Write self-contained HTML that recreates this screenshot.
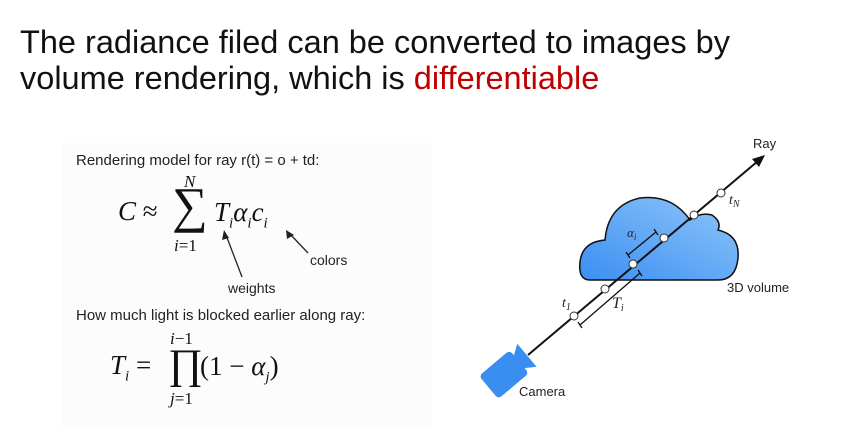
<!DOCTYPE html>
<html><head><style>
body{margin:0;width:856px;height:436px;background:#fff;overflow:hidden;position:relative;font-family:"Liberation Sans",sans-serif}
.t{position:absolute;left:20px;top:24px;font-size:32.5px;line-height:36px;color:#111}
.r{color:#c00000}
.s{position:absolute;font-size:15px;color:#222}
.m{position:absolute;font-family:"Liberation Serif",serif;font-style:italic;color:#111}
</style></head><body>
<div class="t">The radiance filed can be converted to images by<br>volume rendering, which is <span class="r">differentiable</span></div>
<div style="position:absolute;left:62px;top:143px;width:370px;height:285px;background:#fcfcfc"></div>
<div class="s" style="left:76px;top:152px">Rendering model for ray r(t) = o + td:</div>
<div class="m" style="left:184px;top:172px;font-size:17px">N</div>
<div class="m" style="left:118px;top:196px;font-size:27px">C <span style="font-style:normal">≈</span></div>
<div class="m" style="left:172px;top:180px;font-size:50px;font-style:normal;line-height:50px">∑</div>
<div class="m" style="left:214px;top:197px;font-size:27px">T<sub style="font-size:15px">i</sub>α<sub style="font-size:15px">i</sub>c<sub style="font-size:15px">i</sub></div>
<div class="m" style="left:174px;top:236px;font-size:17px">i<span style="font-style:normal">=1</span></div>
<div class="s" style="left:310px;top:252px;font-size:14px">colors</div>
<div class="s" style="left:228px;top:280px;font-size:14px">weights</div>
<svg style="position:absolute;left:0;top:0" width="856" height="436">
<line x1="242" y1="277" x2="226" y2="235" stroke="#222" stroke-width="1.3"/><polygon points="224,230 222,240 229,238" fill="#222"/>
<line x1="308" y1="253" x2="290" y2="234" stroke="#222" stroke-width="1.3"/><polygon points="286,230 287,239 294,235" fill="#222"/>
</svg>
<div class="s" style="left:76px;top:307px">How much light is blocked earlier along ray:</div>
<div class="m" style="left:170px;top:329px;font-size:17px">i<span style="font-style:normal">−1</span></div>
<div class="m" style="left:110px;top:350px;font-size:27px">T<sub style="font-size:15px">i</sub> <span style="font-style:normal">=</span></div>
<div class="m" style="left:168px;top:344px;font-size:42px;font-style:normal;line-height:42px">∏</div>
<div class="m" style="left:200px;top:351px;font-size:27px"><span style="font-style:normal">(1 − </span>α<sub style="font-size:15px">j</sub><span style="font-style:normal">)</span></div>
<div class="m" style="left:170px;top:389px;font-size:17px">j<span style="font-style:normal">=1</span></div>

<svg style="position:absolute;left:0;top:0" width="856" height="436">
<defs><linearGradient id="g" x1="0" y1="1" x2="1" y2="0"><stop offset="0" stop-color="#3b8ef2"/><stop offset="1" stop-color="#8fc7fa"/></linearGradient></defs>
<path d="M590,280 Q578,280 580,262 Q582,242 605,240 Q608,205 640,198 Q672,194 690,220 Q700,212 712,215 Q722,222 718,230 Q740,235 738,258 Q736,280 718,280 Z" fill="url(#g)" stroke="#111" stroke-width="1.5"/>
<line x1="528" y1="355" x2="758" y2="161" stroke="#111" stroke-width="2"/>
<polygon points="765,155 752,159 759,167" fill="#111"/>
<g fill="#fff" stroke="#333" stroke-width="1"><circle cx="574" cy="316" r="4"/><circle cx="605" cy="289" r="4"/><circle cx="633" cy="264" r="4"/><circle cx="664" cy="238" r="4"/><circle cx="694" cy="215" r="4"/><circle cx="721" cy="193" r="4"/></g>
<g stroke="#111" stroke-width="1.3"><line x1="628" y1="255" x2="656" y2="232"/><line x1="626" y1="252" x2="630" y2="258"/><line x1="654" y1="229" x2="658" y2="235"/>
<line x1="580" y1="325" x2="640" y2="273"/><line x1="578" y1="322" x2="582" y2="328"/><line x1="638" y1="270" x2="642" y2="276"/></g>
<g transform="translate(507,372) rotate(-40)"><rect x="-24" y="-15" width="40" height="30" rx="4" fill="#3a8ef0"/><polygon points="14,-7 26,-15 26,15 14,7" fill="#3a8ef0"/></g>
<text x="753" y="148" font-family="Liberation Sans" font-size="13" fill="#222">Ray</text>
<text x="729" y="204" font-family="Liberation Serif" font-style="italic" font-size="14" fill="#222">t<tspan font-size="10" dy="3">N</tspan></text>
<text x="627" y="237" font-family="Liberation Serif" font-style="italic" font-size="13" fill="#222">α<tspan font-size="9" dy="3">i</tspan></text>
<text x="727" y="292" font-family="Liberation Sans" font-size="13" fill="#222">3D volume</text>
<text x="562" y="307" font-family="Liberation Serif" font-style="italic" font-size="14" fill="#222">t<tspan font-size="10" dy="3">1</tspan></text>
<text x="612" y="308" font-family="Liberation Serif" font-style="italic" font-size="16" fill="#222">T<tspan font-size="10" dy="3">i</tspan></text>
<text x="519" y="396" font-family="Liberation Sans" font-size="13" fill="#222">Camera</text>
</svg>
</body></html>
